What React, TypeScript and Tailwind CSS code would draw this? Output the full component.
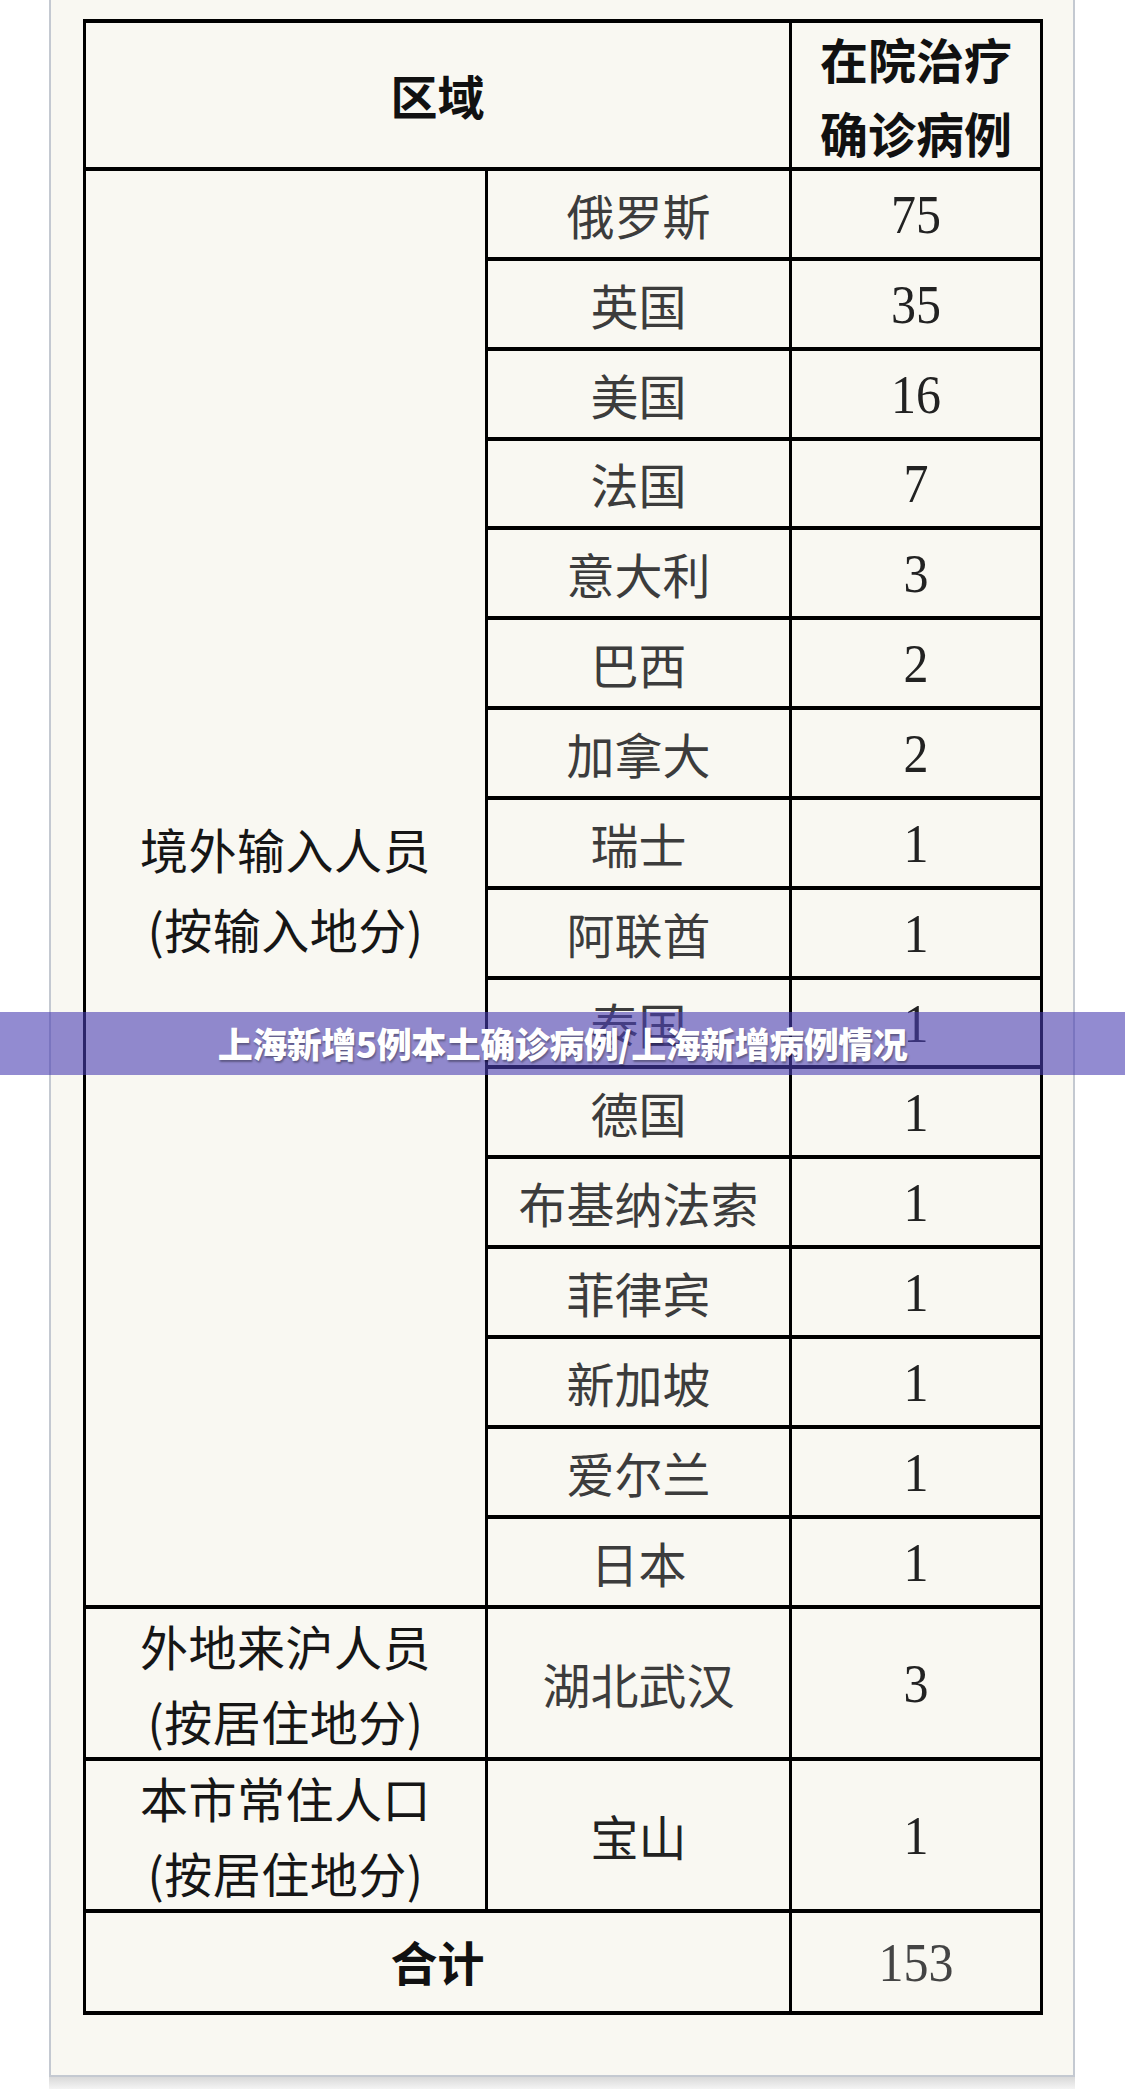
const cjk = "font-['Noto_Sans_CJK_SC',sans-serif]";

const countries: [string, string][] = [
  ["俄罗斯", "75"],
  ["英国", "35"],
  ["美国", "16"],
  ["法国", "7"],
  ["意大利", "3"],
  ["巴西", "2"],
  ["加拿大", "2"],
  ["瑞士", "1"],
  ["阿联酋", "1"],
  ["泰国", "1"],
  ["德国", "1"],
  ["布基纳法索", "1"],
  ["菲律宾", "1"],
  ["新加坡", "1"],
  ["爱尔兰", "1"],
  ["日本", "1"],
];

function Cell({ children, className = "" }: { children: React.ReactNode; className?: string }) {
  return (
    <div className={`bg-[#f9f8f2] flex items-center justify-center ${className}`}>
      {children}
    </div>
  );
}

function Num({ value }: { value: string }) {
  return (
    <Cell>
      <span className="font-['Liberation_Serif',serif] text-[50px] leading-none text-[#222] inline-block scale-y-110">
        {value}
      </span>
    </Cell>
  );
}

function Region({ lines, leading }: { lines: string[]; leading: string }) {
  return (
    <div className={`${cjk} text-[48px] text-[#161616] text-center tracking-[0.5px] ${leading}`}>
      {lines.map((l) => (
        <div key={l}>{l}</div>
      ))}
    </div>
  );
}

export default function App() {
  return (
    <div className="relative w-[1125px] h-[2089px] bg-white overflow-hidden">
      <div className="ml-[49px] w-[1026px]">
        {/* card */}
        <div className="h-[2077px] bg-[#f9f8f2] border-x-2 border-b-2 border-[#c4c9d1] pt-[19px] pl-[32px] pr-[30px]">
          <div className="grid grid-cols-[399px_301px_248px] grid-rows-[144px_repeat(16,85.85px)_148px_148px_98px] gap-x-[3px] gap-y-[4px] bg-black px-[3px] py-[4px] w-[960px]">
            <Cell className="col-span-2">
              <span className={`${cjk} font-bold text-[47px] text-[#111]`}>区域</span>
            </Cell>
            <Cell>
              <div className={`${cjk} font-bold text-[48px] leading-[74px] text-[#111] text-center`}>
                <div>在院治疗</div>
                <div>确诊病例</div>
              </div>
            </Cell>

            <Cell className="row-span-16">
              <Region lines={["境外输入人员", "(按输入地分)"]} leading="leading-[80px]" />
            </Cell>
            {countries.map(([name, n]) => (
              <>
                <Cell key={name}>
                  <span className={`${cjk} text-[48px] leading-none text-[#3c3c3c]`}>{name}</span>
                </Cell>
                <Num key={name + "n"} value={n} />
              </>
            ))}

            <Cell>
              <Region lines={["外地来沪人员", "(按居住地分)"]} leading="leading-[75px]" />
            </Cell>
            <Cell>
              <span className={`${cjk} text-[48px] leading-none text-[#3c3c3c]`}>湖北武汉</span>
            </Cell>
            <Num value="3" />

            <Cell>
              <Region lines={["本市常住人口", "(按居住地分)"]} leading="leading-[75px]" />
            </Cell>
            <Cell>
              <span className={`${cjk} text-[48px] leading-none text-[#222]`}>宝山</span>
            </Cell>
            <Num value="1" />

            <Cell className="col-span-2">
              <span className={`${cjk} font-bold text-[47px] text-[#111]`}>合计</span>
            </Cell>
            <Cell>
              <span className="font-['Liberation_Serif',serif] text-[50px] leading-none text-[#444] inline-block scale-y-110">153</span>
            </Cell>
          </div>
        </div>
        <div className="h-[12px] bg-gradient-to-b from-[#d9d9d9] to-[#f4f4f4]" />
      </div>

      {/* title banner */}
      <div className="absolute left-0 top-[1012px] w-full h-[63px] bg-[rgba(74,61,179,0.6)] flex items-center justify-center">
        <span className={`${cjk} font-black text-[35px] text-white tracking-[-0.5px] [text-shadow:1px_2px_2px_rgba(0,0,0,0.35)]`}>
          上海新增5例本土确诊病例/上海新增病例情况
        </span>
      </div>
    </div>
  );
}
